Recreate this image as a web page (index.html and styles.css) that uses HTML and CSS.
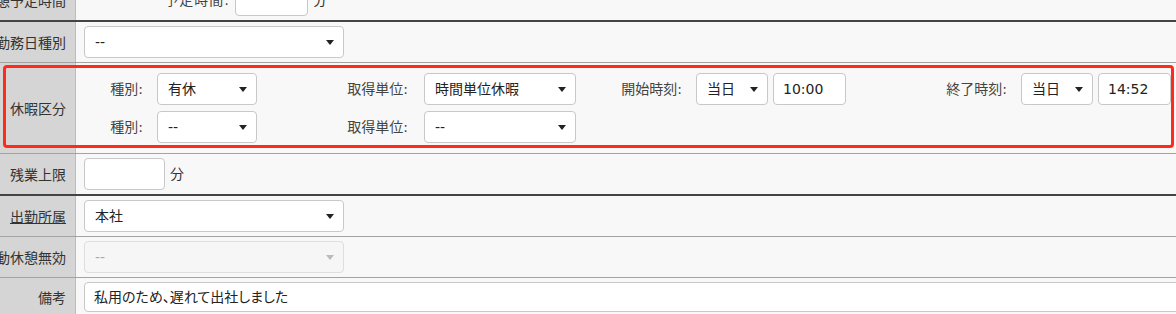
FILE: index.html
```html
<!DOCTYPE html>
<html lang="ja">
<head>
    <meta charset="UTF-8">
    <meta name="viewport" content="width=device-width, initial-scale=1.0">
    <title>勤怠申請</title>
    <link rel="stylesheet" href="styles.css">
</head>
<body>
    <div class="form">
        <div class="row sep">
            <div class="th">休憩予定時間</div>
            <div class="td">
                <span class="sub-label plan">予定時間:</span>
                <div class="input w-time"></div>
                <span class="unit">分</span>
            </div>
        </div>

        <div class="row">
            <div class="th">勤務日種別</div>
            <div class="td"><div class="select w-long">--</div></div>
        </div>

        <div class="row leave">
            <div class="th">休暇区分</div>
            <div class="td leave-grid">
                <span class="sub-label">種別:</span>
                <div class="select">有休</div>
                <span class="sub-label">取得単位:</span>
                <div class="select">時間単位休暇</div>
                <span class="sub-label">開始時刻:</span>
                <div class="pair">
                    <div class="select w-day">当日</div>
                    <div class="input w-time">10:00</div>
                </div>
                <span class="sub-label">終了時刻:</span>
                <div class="pair">
                    <div class="select w-day">当日</div>
                    <div class="input w-time">14:52</div>
                </div>

                <span class="sub-label">種別:</span>
                <div class="select">--</div>
                <span class="sub-label">取得単位:</span>
                <div class="select">--</div>
            </div>
            <div class="highlight"></div>
        </div>

        <div class="row sep">
            <div class="th">残業上限</div>
            <div class="td">
                <div class="input w-num"></div>
                <span class="unit">分</span>
            </div>
        </div>

        <div class="row">
            <div class="th"><a class="link">出勤所属</a></div>
            <div class="td"><div class="select w-long">本社</div></div>
        </div>

        <div class="row">
            <div class="th">移動休憩無効</div>
            <div class="td"><div class="select w-long disabled">--</div></div>
        </div>

        <div class="row">
            <div class="th">備考</div>
            <div class="td"><div class="input w-note">私用のため、遅れて出社しました</div></div>
        </div>
    </div>
</body>
</html>
```

FILE: styles.css
```css
* {
    box-sizing: border-box;
}
html, body {
    margin: 0;
    padding: 0;
}
body {
    font-family: "DejaVu Sans", "Noto Sans CJK JP", sans-serif;
    font-size: 14px;
    color: #333;
    background: #f8f8f8;
    width: 1176px;
    height: 314px;
    overflow: hidden;
}
.form {
    margin-top: -20px;
}
.row {
    display: flex;
    position: relative;
    border-bottom: 1px solid #a3a3a3;
}
.row.sep {
    border-bottom: 2px solid #444;
}
.th {
    flex: 0 0 76px;
    width: 76px;
    min-width: 0;
    display: flex;
    justify-content: flex-end;
    align-items: center;
    padding-right: 9px;
    background: #d5d5d5;
    border-right: 1px solid #bcbcbc;
    white-space: nowrap;
    color: #333;
}
.td {
    flex: 1;
    min-width: 0;
    display: flex;
    align-items: center;
    padding: 4px 8px;
    background: #f8f8f8;
    line-height: 20px;
}
.link {
    color: #333;
    text-decoration: underline;
}
.sub-label {
    color: #444;
    white-space: nowrap;
}
.sub-label.plan {
    flex: none;
    width: 146px;
    text-align: right;
    margin-right: 5px;
    letter-spacing: 1px;
}
.unit {
    margin-left: 5px;
    color: #333;
}

/* fake controls */
.select {
    position: relative;
    flex: none;
    height: 32px;
    line-height: 30px;
    padding: 0 24px 0 10px;
    background: #fff;
    border: 1px solid #c8c8c8;
    border-radius: 4px;
    color: #222;
    white-space: nowrap;
}
.select::after {
    content: "";
    position: absolute;
    right: 9px;
    top: 13px;
    border-left: 4px solid transparent;
    border-right: 4px solid transparent;
    border-top: 5px solid #222;
}
.select.disabled {
    background: #f6f6f6;
    border-color: #dedede;
    color: #aaa;
}
.select.disabled::after {
    border-top-color: #bbb;
}
.input {
    flex: none;
    height: 32px;
    line-height: 30px;
    padding: 0 9px;
    background: #fff;
    border: 1px solid #c8c8c8;
    border-radius: 4px;
    color: #222;
    white-space: nowrap;
}
.w-long {
    width: 260px;
}
.w-time {
    width: 73px;
}
.w-day {
    width: 72px;
}
.w-num {
    width: 81px;
}
.w-note {
    width: 1120px;
    height: 30px;
    line-height: 28px;
    font-feature-settings: "palt";
}

/* 休暇区分 */
.leave-grid {
    display: grid;
    grid-template-columns: 81px 100px 167px 152px 120px 150px 175px 150px;
    row-gap: 6px;
    padding: 10px 0;
    align-items: center;
}
.leave-grid .sub-label {
    text-align: right;
    padding-right: 14px;
}
.leave-grid .sub-label:nth-of-type(2),
.leave-grid .sub-label:nth-of-type(6) {
    padding-right: 16px;
}
.pair {
    display: flex;
    gap: 5px;
}
.highlight {
    position: absolute;
    left: 3px;
    top: 2px;
    width: 1171px;
    height: 83px;
    border: 3px solid #ff2a1a;
    border-radius: 4px;
    pointer-events: none;
}
```
